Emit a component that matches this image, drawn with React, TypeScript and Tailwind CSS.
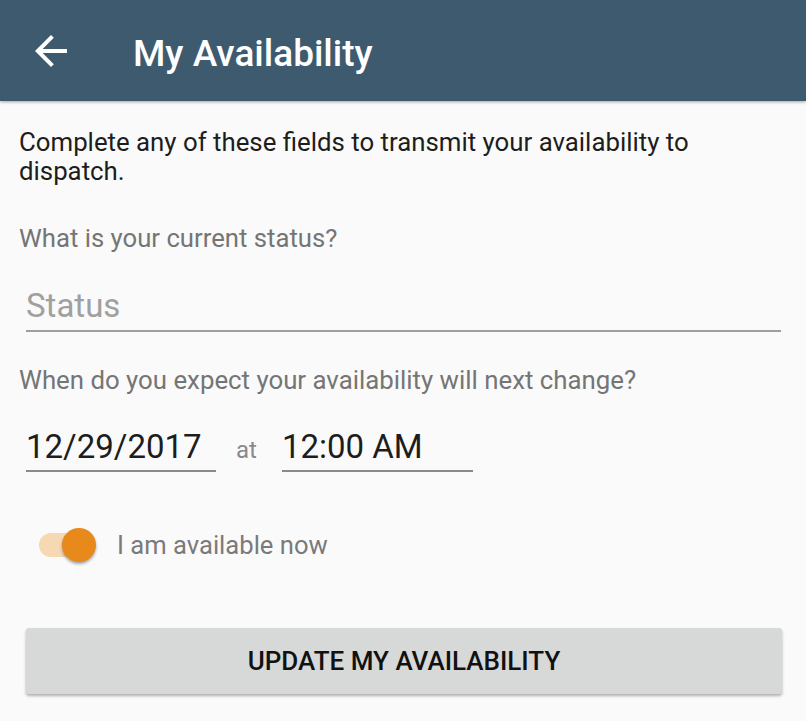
import { useState } from "react";

function BackArrow() {
  return (
    <svg viewBox="0 0 24 24" className="h-[48px] w-[48px]" fill="white">
      <path d="M20 11H7.83l5.59-5.59L12 4l-8 8 8 8 1.41-1.41L7.83 13H20v-2z" />
    </svg>
  );
}

export default function App() {
  const [available, setAvailable] = useState(true);

  return (
    <div className="min-h-[721px] bg-[#fafafa] font-['Roboto',sans-serif]">
      <header className="flex h-[101px] items-center bg-[#3d5a6f] shadow-[0_1px_3px_rgba(0,0,0,0.35)]">
        <div className="ml-[27px] flex">
          <BackArrow />
        </div>
        <h1 className="ml-[58px] mt-[6px] text-[37px] font-medium text-white">My Availability</h1>
      </header>

      <main className="px-[19px] pt-[27px]">
        <p className="text-[25.8px] leading-[29px] text-[#1d1d1d]">
          Complete any of these fields to transmit your availability to dispatch.
        </p>

        <p className="mt-[37px] text-[25.7px] leading-[30px] text-[#757575]">
          What is your current status?
        </p>
        <div className="ml-[7px] mr-[6px] mt-[34px] border-b-2 border-[#9e9e9e] pb-[5px]">
          <input
            className="block h-[38px] w-full bg-transparent text-[33px] leading-[38px] text-[#333] outline-none placeholder:text-[#a0a0a0]"
            placeholder="Status"
          />
        </div>

        <p className="mt-[33px] text-[25.8px] leading-[30px] text-[#757575]">
          When do you expect your availability will next change?
        </p>

        <div className="ml-[7px] mt-[33px] flex items-baseline">
          <div className="w-[190px] border-b-2 border-[#8a8a8a] pb-[4px] text-[33px] leading-[38px] text-[#1d1d1d]">
            12/29/2017
          </div>
          <span className="ml-[20px] mr-[25px] text-[24px] text-[#8a8a8a]">at</span>
          <div className="w-[191px] border-b-2 border-[#8a8a8a] pb-[4px] text-[33px] leading-[38px] text-[#1d1d1d]">
            12:00 AM
          </div>
        </div>

        <div className="ml-[20px] mt-[54px] flex items-center">
          <button
            onClick={() => setAvailable(!available)}
            className="relative h-[34px] w-[57px] shrink-0"
          >
            <span className="absolute left-0 top-[5px] h-[24px] w-[54px] rounded-full bg-[#f6d8b2]" />
            <span
              className={`absolute top-0 h-[34px] w-[34px] rounded-full shadow-[0_2px_3px_rgba(0,0,0,0.35)] ${
                available ? "left-[23px] bg-[#e8891c]" : "left-0 bg-[#f1f1f1]"
              }`}
            />
          </button>
          <span className="ml-[21px] text-[25.6px] text-[#7a7a7a]">I am available now</span>
        </div>

        <button className="ml-[7px] mt-[64px] flex h-[66px] w-[756px] items-center justify-center rounded-[3px] bg-[#d7d8d8] text-[26px] font-medium text-[#111] shadow-[0_2px_3px_rgba(0,0,0,0.3)]">
          UPDATE MY AVAILABILITY
        </button>
      </main>
    </div>
  );
}
